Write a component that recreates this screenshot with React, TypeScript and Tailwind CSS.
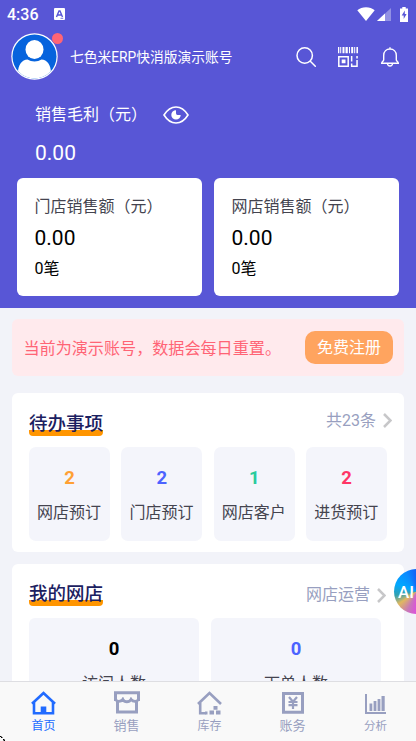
import React from 'react';

type Todo = { label: string; count: number; color: string };

const todos: Todo[] = [
  { label: '网店预订', count: 2, color: 'text-[#ffa033]' },
  { label: '门店预订', count: 2, color: 'text-[#4c63ff]' },
  { label: '网店客户', count: 1, color: 'text-[#2acb9c]' },
  { label: '进货预订', count: 2, color: 'text-[#ff3565]' },
];

const StatusBar = () => (
  <div className="flex h-7 items-center pl-[7px] pr-[8px] text-white">
    <span className="w-[47px] pt-[2px] text-[16px] font-medium leading-7">4:36</span>
    <svg width="11" height="12" viewBox="0 0 11 12">
      <rect width="11" height="12" rx="1" fill="#fff" />
      <path d="M2.5 9 5 3h1l2.5 6M3.6 7h3.8" fill="none" stroke="#5856d6" strokeWidth="1.4" />
      <path d="M6.5 10.3h2.7" stroke="#5856d6" strokeWidth=".8" />
    </svg>
    <div className="ml-auto flex items-center">
      <svg width="18" height="14" viewBox="0 0 18 14" className="mr-[2px]">
        <path d="M9 14 .3 3.2C2.7 1.3 5.7.2 9 .2s6.300 1.100 8.700 3z" fill="#fff" />
      </svg>
      <svg width="14" height="13" viewBox="0 0 14 13" className="mr-[9px]">
        <path d="M14 0v13H0z" fill="#fff" opacity=".35" />
        <path d="M8 5.600V13H0z" fill="#fff" />
      </svg>
      <svg width="8" height="15" viewBox="0 0 8 15">
        <path d="M2.300 0h3.400v1.500H8V15H0V1.500h2.300z" fill="#fff" />
        <path d="M4.800 3.600 1.700 8.600h2v3.300l2.900-5h-1.800z" fill="#5856d6" />
      </svg>
    </div>
  </div>
);

const Avatar = () => (
  <div className="relative size-[47px]">
    <svg width="47" height="47" viewBox="0 0 47 47">
      <defs>
        <clipPath id="face">
          <circle cx="23.5" cy="23.500" r="22" />
        </clipPath>
      </defs>
      <circle cx="23.500" cy="23.500" r="23.200" fill="#fff" />
      <circle cx="23.500" cy="23.500" r="22" fill="#0663dd" />
      <g clipPath="url(#face)" fill="#fff">
        <ellipse cx="23.500" cy="16.500" rx="9" ry="9.500" />
        <path d="M7 40c0-8 4-13.500 9.500-13.500 2 1.300 4.500 2 7 2s5-.7 7-2C36 26.500 40 32 40 40v9H7z" />
      </g>
    </svg>
    <span className="absolute -right-[5px] top-0 size-[11px] rounded-full bg-[#ff6475]" />
  </div>
);

const Header = () => (
  <div className="flex h-[57px] items-center pl-[11px] pr-[17px]">
    <Avatar />
    <span className="ml-[12px] pt-[1px] text-[13.750px] text-white">七色米ERP快消版演示账号</span>
    <div className="ml-auto flex items-center">
      <svg width="20" height="20" viewBox="0 0 20 20" fill="none" stroke="#fff" strokeWidth="1.500" strokeLinecap="round" className="mr-[22px]">
        <circle cx="8.700" cy="8.500" r="7.700" />
        <path d="m14.300 14.300 5 4.900" />
      </svg>
      <svg width="20" height="20" viewBox="0 0 20 20" className="mr-[23px]" fill="#fff">
        <path d="M0 0h1.300v6.300H0zM2.200 0h1v6.300h-1zM4.500 0h2v6.300h-2zM7.500 0h2.300v6.300H7.500zM11 0h1v6.300h-1zM13.200 0h2v6.300h-2zM16.200 0h1v6.300h-1zM18.400 0H20v6.300h-1.600z" />
        <path d="M.8 9.800h9.400v9.400H.8z" fill="none" stroke="#fff" strokeWidth="1.500" />
        <path d="M3.700 12.500h3.800v3.800H3.700zM12.900 9h1.500v5.500h-1.500zM18.300 9h1.500v2.500h-1.500zM18.300 13h1.500v7h-6.900v-3.600h1.500v2.100h3.900z" />
      </svg>
      <svg width="18" height="20" viewBox="0 0 18 20" fill="none" stroke="#fff" strokeWidth="1.400">
        <path d="M.7 16.200h16.600c0-1.700-2-1.600-2-3.400V8.500C15.300 4.500 12.500 2 9 2S2.700 4.500 2.700 8.500v4.300c0 1.800-2 1.700-2 3.400zM9 .2V2M6.400 16.500c.2 1.700 1.300 2.500 2.600 2.500s2.400-.8 2.600-2.500" />
      </svg>
    </div>
  </div>
);

const SalesCard = ({ title }: { title: string }) => (
  <div className="h-[118px] w-[185px] rounded-[6px] bg-white pl-[17.500px] pt-[17px]">
    <div className="text-[16px] leading-6 text-[#44444f]">{title}</div>
    <div className="mt-[4px] text-[21px] leading-[30px] text-black">0.00</div>
    <div className="mt-[4px] text-[16px] leading-6 text-black">0笔</div>
  </div>
);

const SectionTitle = ({ title, more, tight }: { title: string; more: string; tight?: boolean }) => (
  <div className="flex h-[27px] items-start justify-between pl-[17px] pr-[12px]">
    <div className="relative h-[27px] w-[74px]">
      <span className="absolute bottom-0 left-0 h-[6px] w-full rounded-b-[4px] bg-[#ff9500]" />
      <span className="relative block whitespace-nowrap pt-[2px] text-[18.500px] font-medium leading-[27px] text-[#1b2060]">{title}</span>
    </div>
    <div className={tight ? 'mr-[6px] flex items-center pt-[4px]' : 'flex h-[23px] items-center'}>
      <span className="text-[16px] leading-6 text-[#989fc0]">{more}</span>
      <svg width="9" height="15" viewBox="0 0 9 15" className="ml-[7px]">
        <path d="m1 1 6.500 6.500L1 14" fill="none" stroke="#c7c7c9" strokeWidth="2.500" />
      </svg>
    </div>
  </div>
);

const StoreTile = ({ label, color }: { label: string; color: string }) => (
  <div className="flex h-[94px] w-[170px] flex-col items-center rounded-[6px] bg-[#f4f5fb] pt-[19px]">
    <span className={`text-[18.500px] font-bold leading-6 ${color}`}>0</span>
    <span className="mt-[11px] text-[16px] leading-6 text-[#44444f]">{label}</span>
  </div>
);

const HomeIcon = () => (
  <svg width="25" height="24" viewBox="0 0 25 24">
    <path d="M1 12.800 12.500 2 24 12.800M3 11.500v10.800h19V11.500" fill="none" stroke="#216bff" strokeWidth="2.600" />
    <path d="M9.700 15.500h5.600V23H9.700z" fill="#216bff" />
  </svg>
);

const ShopIcon = () => (
  <svg width="26" height="24" viewBox="0 0 26 24" fill="none" stroke="#989fc0" strokeWidth="3">
    <path d="M1.500 10V1.700h23V10M3.500 10v11h19V10" />
    <path d="M1.500 8.300c1.500 2.800 5 2.800 7.300.2 1.700 3 6.400 3 8.200 0 2.300 2.600 6 2.600 7.500-.2" strokeWidth="2.800" />
    <path d="M8.800 6.500v3M17 6.500v3" strokeWidth="1.500" />
  </svg>
);

const StockIcon = () => (
  <svg width="25" height="24" viewBox="0 0 25 24" fill="none" stroke="#989fc0">
    <path d="M1 13 12.500 2 24 13M3.200 11.500v10.700h5.500" strokeWidth="2.600" />
    <path d="M16.500 15h4v3.800h-4zM12.500 19.500h4.500v4h-4.500zM19 19.500h4.500v4H19zM8 20.500h2.500v3H8z" fill="#989fc0" stroke="none" />
  </svg>
);

const BillIcon = () => (
  <svg width="22" height="24" viewBox="0 0 22 24" fill="none" stroke="#989fc0">
    <path d="M1.500 2.500h19v18.800h-19z" strokeWidth="3" />
    <path d="m7 6 4 4.700L15 6M6.500 11h9M6.500 14.200h9M11 10v8" strokeWidth="2.200" />
  </svg>
);

const ChartIcon = () => (
  <svg width="21" height="24" viewBox="0 0 21 24" fill="#989fc0">
    <path d="M0 3h2v18h19v2H0zM4.500 12.500h2.800V20H4.500zM8.600 10h2.800v10H8.600zM12.600 8h2.800v12h-2.800zM16.500 5h3.200v15h-3.200z" />
  </svg>
);

const tabs = [
  { label: '首页', icon: <HomeIcon />, cls: 'text-[12px] text-[#216bff]' },
  { label: '销售', icon: <ShopIcon />, cls: 'text-[13px] text-[#989fc0]' },
  { label: '库存', icon: <StockIcon />, cls: 'text-[12px] text-[#989fc0]' },
  { label: '账务', icon: <BillIcon />, cls: 'text-[13px] text-[#989fc0]' },
  { label: '分析', icon: <ChartIcon />, cls: 'text-[11.500px] text-[#989fc0]' },
];

export default function App() {
  return (
    <div className="relative flex h-[741px] w-[416px] flex-col overflow-hidden bg-[#f2f3f9] font-['Roboto','Noto_Sans_CJK_SC',sans-serif]">
      <main className="min-h-0 flex-1 overflow-hidden">
        <section className="h-[308px] bg-[#5856d6]">
          <StatusBar />
          <Header />
          <div className="flex h-[57px] items-center pl-[35px] pt-[2px] text-white">
            <span className="text-[16px] leading-6">销售毛利（元）</span>
            <svg width="26" height="18" viewBox="0 0 26 18" className="ml-[15.500px]">
              <path d="M1 9c3.300-5.300 7.300-8 12-8s8.700 2.700 12 8c-3.300 5.300-7.300 8-12 8S4.300 14.300 1 9z" fill="none" stroke="#fff" strokeWidth="1.600" />
              <path d="M13 4.200a4.700 4.700 0 1 0 4.700 4.700h-3.200A1.600 1.600 0 0 1 13 7.300z" fill="#fff" />
            </svg>
          </div>
          <div className="h-[36px] pl-[35px] text-[21px] leading-[23px] text-white">0.00</div>
          <div className="flex gap-[12px] pl-[17px]">
            <SalesCard title="门店销售额（元）" />
            <SalesCard title="网店销售额（元）" />
          </div>
        </section>

        <div className="mx-3 mt-[11px] flex h-[57px] items-center justify-between rounded-[6px] bg-[#ffeaed] pl-[11.500px] pr-[11px]">
          <span className="pt-[2px] text-[16.100px] leading-6 text-[#ff6475]">当前为演示账号，数据会每日重置。</span>
          <button type="button" className="h-[33px] w-[88px] rounded-[10px] bg-[#ffa45f] pt-[1px] text-[16px] leading-[32px] text-white">
            免费注册
          </button>
        </div>

        <section className="mx-3 mt-[17px] h-[159px] rounded-[6px] bg-white pt-[16px]">
          <SectionTitle title="待办事项" more="共23条" />
          <div className="mt-[11px] flex gap-[11.400px] pl-[17px]">
            {todos.map(t => (
              <div key={t.label} className="flex h-[94px] w-[81px] flex-col items-center rounded-[7px] bg-[#f4f5fb] pt-[19px]">
                <span className={`text-[18.500px] font-bold leading-6 ${t.color}`}>{t.count}</span>
                <span className="mt-[11px] pr-[1px] text-[16px] leading-6 text-[#44444f]">{t.label}</span>
              </div>
            ))}
          </div>
        </section>

        <section className="mx-3 mt-[12px] h-[160px] rounded-[6px] bg-white pt-[15px]">
          <SectionTitle title="我的网店" more="网店运营" tight />
          <div className="mt-[12px] flex gap-[12px] pl-[17px]">
            <StoreTile label="访问人数" color="text-black" />
            <StoreTile label="下单人数" color="text-[#4c63ff]" />
          </div>
        </section>
      </main>

      <nav className="flex h-[60px] shrink-0 border-t border-[#dedee2] bg-[#f9f9f9] pl-[2px]">
        {tabs.map(tab => (
          <div key={tab.label} className="flex w-[83px] shrink-0 flex-col items-center pt-[9px]">
            {tab.icon}
            <span className={`mt-[2px] leading-[18px] ${tab.cls}`}>{tab.label}</span>
          </div>
        ))}
      </nav>

      {/* floating assistant, half docked to the right edge */}
      <div className="absolute left-[394px] top-[569px] h-[45px] w-[45px] rounded-full bg-[conic-gradient(from_0deg,#1260f5,#2450f0_80deg,#a060f0_150deg,#dc50dc_180deg,#c878b8_205deg,#e0b860_235deg,#30a0b0_260deg,#00a8ff_290deg,#0a8cff_330deg,#1260f5)] pl-[4px] text-[17px] font-medium leading-[46px] text-white">
        AI
      </div>
      <svg width="5" height="5" viewBox="0 0 5 5" className="absolute bottom-0 left-0">
        <path d="M0 .5h1.500M1 1.500h1.500M3 3.500h1.500M3.500 4.500H5" stroke="#000" />
      </svg>
    </div>
  );
}
